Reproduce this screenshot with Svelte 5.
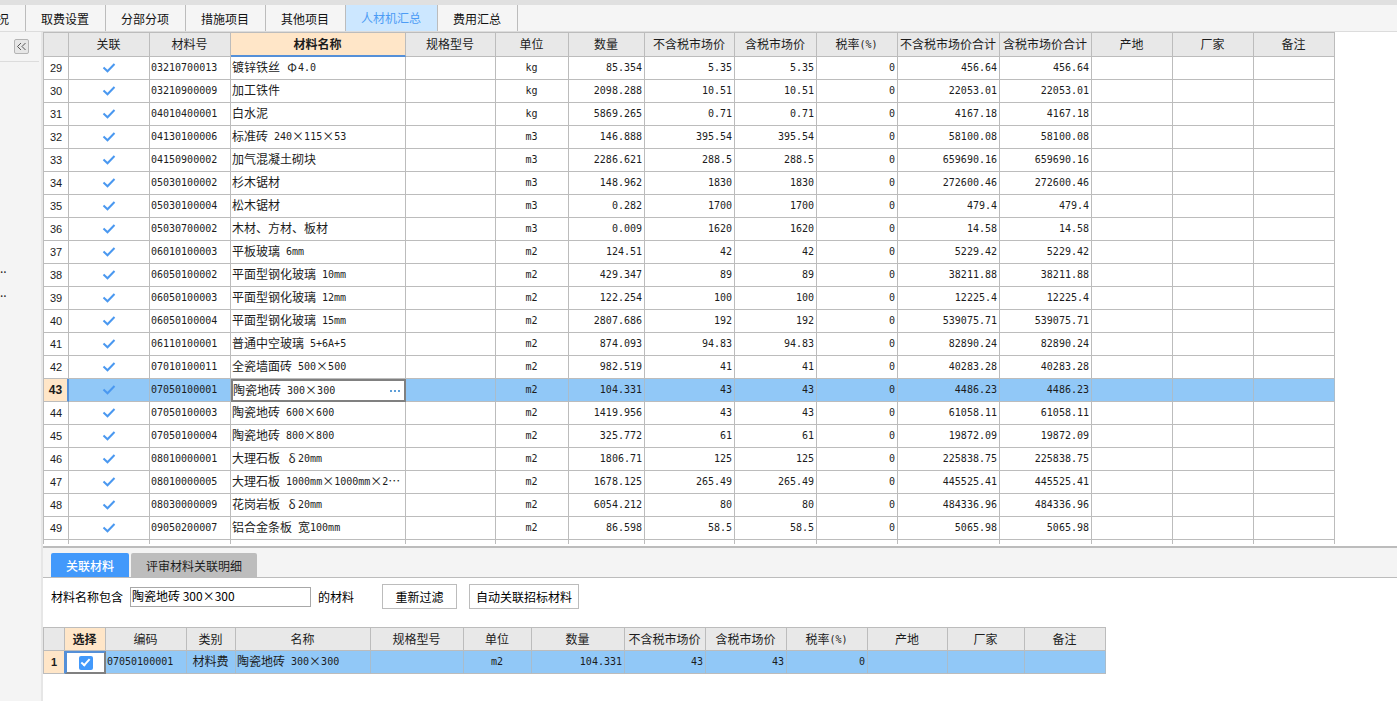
<script lang="ts">
	interface Column {
		label: string;
		width: number;
		active?: boolean;
	}

	const tabs = ['况', '取费设置', '分部分项', '措施项目', '其他项目', '人材机汇总', '费用汇总'];
	let activeTab = $state('人材机汇总');
	let filter = $state('陶瓷地砖 300×300');
	let linked = $state(true);
	const selected = 43;

	const columns: Column[] = [
		{ label: '', width: 25 },
		{ label: '关联', width: 81 },
		{ label: '材料号', width: 81 },
		{ label: '材料名称', width: 175, active: true },
		{ label: '规格型号', width: 90 },
		{ label: '单位', width: 73 },
		{ label: '数量', width: 76 },
		{ label: '不含税市场价', width: 90 },
		{ label: '含税市场价', width: 82 },
		{ label: '税率(%)', width: 81 },
		{ label: '不含税市场价合计', width: 102 },
		{ label: '含税市场价合计', width: 92 },
		{ label: '产地', width: 81 },
		{ label: '厂家', width: 81 },
		{ label: '备注', width: 81 }
	];

	const linkColumns: Column[] = [
		{ label: '', width: 21 },
		{ label: '选择', width: 41, active: true },
		{ label: '编码', width: 81 },
		{ label: '类别', width: 49 },
		{ label: '名称', width: 135 },
		{ label: '规格型号', width: 93 },
		{ label: '单位', width: 68 },
		{ label: '数量', width: 93 },
		{ label: '不含税市场价', width: 81 },
		{ label: '含税市场价', width: 81 },
		{ label: '税率(%)', width: 81 },
		{ label: '产地', width: 80 },
		{ label: '厂家', width: 77 },
		{ label: '备注', width: 81 }
	];

	// no, code, name, unit, quantity, price, total
	const materials: [number, string, string, string, string, string, string][] = [
		[29, '03210700013', '镀锌铁丝 Φ4.0', 'kg', '85.354', '5.35', '456.64'],
		[30, '03210900009', '加工铁件', 'kg', '2098.288', '10.51', '22053.01'],
		[31, '04010400001', '白水泥', 'kg', '5869.265', '0.71', '4167.18'],
		[32, '04130100006', '标准砖 240×115×53', 'm3', '146.888', '395.54', '58100.08'],
		[33, '04150900002', '加气混凝土砌块', 'm3', '2286.621', '288.5', '659690.16'],
		[34, '05030100002', '杉木锯材', 'm3', '148.962', '1830', '272600.46'],
		[35, '05030100004', '松木锯材', 'm3', '0.282', '1700', '479.4'],
		[36, '05030700002', '木材、方材、板材', 'm3', '0.009', '1620', '14.58'],
		[37, '06010100003', '平板玻璃 6mm', 'm2', '124.51', '42', '5229.42'],
		[38, '06050100002', '平面型钢化玻璃 10mm', 'm2', '429.347', '89', '38211.88'],
		[39, '06050100003', '平面型钢化玻璃 12mm', 'm2', '122.254', '100', '12225.4'],
		[40, '06050100004', '平面型钢化玻璃 15mm', 'm2', '2807.686', '192', '539075.71'],
		[41, '06110100001', '普通中空玻璃 5+6A+5', 'm2', '874.093', '94.83', '82890.24'],
		[42, '07010100011', '全瓷墙面砖 500×500', 'm2', '982.519', '41', '40283.28'],
		[43, '07050100001', '陶瓷地砖 300×300', 'm2', '104.331', '43', '4486.23'],
		[44, '07050100003', '陶瓷地砖 600×600', 'm2', '1419.956', '43', '61058.11'],
		[45, '07050100004', '陶瓷地砖 800×800', 'm2', '325.772', '61', '19872.09'],
		[46, '08010000001', '大理石板 δ20mm', 'm2', '1806.71', '125', '225838.75'],
		[47, '08010000005', '大理石板 1000mm×1000mm×2…', 'm2', '1678.125', '265.49', '445525.41'],
		[48, '08030000009', '花岗岩板 δ20mm', 'm2', '6054.212', '80', '484336.96'],
		[49, '09050200007', '铝合金条板 宽100mm', 'm2', '86.598', '58.5', '5065.98']
	];

	// Half-width runs use the mono face, symbols take a full character cell
	function runs(text: string) {
		return (text.match(/[×δΦ…]|[\x20-\x7e]+|[^\x20-\x7e×δΦ…]+/g) ?? []).map((part) => ({
			part,
			kind: /[×δΦ…]/.test(part) ? 'wide' : /[\x20-\x7e]/.test(part) ? 'mono' : 'han'
		}));
	}
</script>

{#snippet mixed(text: string)}
	{#each runs(text) as { part, kind }}<span class={kind}>{part}</span>{/each}
{/snippet}

{#snippet head(cols: Column[])}
	<colgroup>
		{#each cols as col}
			<col style:width="{col.width}px" />
		{/each}
	</colgroup>
	<thead>
		<tr>
			{#each cols as col}
				<th scope="col" class:active={col.active}>{@render mixed(col.label)}</th>
			{/each}
		</tr>
	</thead>
{/snippet}

<div class="app">
	<nav class="tabs">
		{#each tabs as tab}
			<button class="tab" class:active={tab === activeTab} onclick={() => (activeTab = tab)}>{tab}</button>
		{/each}
	</nav>

	<div class="body">
		<aside>
			<div class="aside-head">
				<button class="collapse" aria-label="收起">
					<svg width="11" height="9" viewBox="0 0 11 9" fill="none" stroke="#555">
						<path d="M5 1 1.5 4.5 5 8M9.5 1 6 4.5 9.5 8" />
					</svg>
				</button>
			</div>
			<div class="tree">
				<span>..</span>
				<span>..</span>
			</div>
		</aside>

		<main>
			<section class="grid-area">
				<table class="grid main-grid">
					{@render head(columns)}
					<tbody>
						{#each materials as [no, code, name, unit, quantity, price, total]}
							<tr class:selected={no === selected}>
								<th scope="row" class="no">{no}</th>
								<td class="center">
									<svg class="check" width="14" height="10" viewBox="0 0 14 10" fill="none">
										<path d="M1.5 4.5 5.5 8.3 12.5 1" stroke="#4a98f0" stroke-width="2" />
									</svg>
								</td>
								<td>{@render mixed(code)}</td>
								<td class="name">
									{#if no === selected}
										<div class="editor">
											<span>{@render mixed(name)}</span>
											<button class="more" aria-label="选择材料"><i></i><i></i><i></i></button>
										</div>
									{:else}
										{@render mixed(name)}
									{/if}
								</td>
								<td></td>
								<td class="center">{@render mixed(unit)}</td>
								<td class="num">{@render mixed(quantity)}</td>
								<td class="num">{@render mixed(price)}</td>
								<td class="num">{@render mixed(price)}</td>
								<td class="num">{@render mixed('0')}</td>
								<td class="num">{@render mixed(total)}</td>
								<td class="num">{@render mixed(total)}</td>
								<td></td>
								<td></td>
								<td></td>
							</tr>
						{/each}
						<tr>
							{#each columns as _}
								<td></td>
							{/each}
						</tr>
					</tbody>
				</table>
			</section>

			<section class="panel">
				<div class="panel-tabs">
					<button class="panel-tab active">关联材料</button>
					<button class="panel-tab">评审材料关联明细</button>
				</div>
				<form class="filter" onsubmit={(e) => e.preventDefault()}>
					<label for="filter">材料名称包含</label>
					<input id="filter" type="text" bind:value={filter} />
					<span>的材料</span>
					<button class="refilter">重新过滤</button>
					<button type="button" class="auto">自动关联招标材料</button>
				</form>
				<table class="grid link-grid">
					{@render head(linkColumns)}
					<tbody>
						<tr class="selected">
							<th scope="row" class="no">1</th>
							<td class="pick"><input type="checkbox" aria-label="选择" bind:checked={linked} /></td>
							<td>{@render mixed('07050100001')}</td>
							<td class="center">材料费</td>
							<td>{@render mixed('陶瓷地砖 300×300')}</td>
							<td></td>
							<td class="center">{@render mixed('m2')}</td>
							<td class="num">{@render mixed('104.331')}</td>
							<td class="num">{@render mixed('43')}</td>
							<td class="num">{@render mixed('43')}</td>
							<td class="num">{@render mixed('0')}</td>
							<td></td>
							<td></td>
							<td></td>
						</tr>
					</tbody>
				</table>
			</section>
		</main>
	</div>
</div>

<style>
	:global(body) {
		margin: 0;
		background: #fff;
	}
	.app {
		display: flex;
		flex-direction: column;
		height: 100vh;
		overflow: hidden;
		font-family: 'Noto Sans CJK SC', sans-serif;
		font-size: 12px;
		color: #1c1c1c;
	}
	button,
	input {
		box-sizing: border-box;
		margin: 0;
		font: inherit;
		color: inherit;
	}

	.tabs {
		display: flex;
		height: 26px;
		border-top: 5px solid #e0e0e0;
		border-bottom: 1px solid #dcdcdc;
		background: #f5f5f5;
	}
	.tab {
		flex: none;
		padding: 0 16px 0 15px;
		border: 0;
		border-right: 1px solid #bcbcbc;
		background: none;
		color: #111;
	}
	.tab:first-child {
		margin-left: -18px;
	}
	.tab.active {
		padding-bottom: 2px;
		background: #cce7ff;
		color: #4c9cf5;
	}

	.body {
		display: flex;
		flex: 1;
		min-height: 0;
	}
	aside {
		flex: none;
		width: 41px;
		border-right: 2px solid #e6e6e6;
		background: #f4f4f4;
	}
	.aside-head {
		display: flex;
		height: 22px;
		margin-right: 2px;
		padding: 7px 0 0 14px;
		border-bottom: 1px solid #dcdcdc;
	}
	.collapse {
		display: grid;
		place-items: center;
		width: 15px;
		height: 15px;
		padding: 0;
		border: 1px solid #b4b4b4;
		border-radius: 2px;
		background: #e6e6e6;
	}
	.tree {
		display: flex;
		flex-direction: column;
		padding-top: 194px;
		line-height: 24px;
	}

	main {
		display: flex;
		flex: 1;
		flex-direction: column;
		min-width: 0;
	}
	.grid-area {
		flex: 1;
		min-height: 0;
		margin-bottom: 2px;
		overflow: hidden;
	}

	.grid {
		table-layout: fixed;
		border-spacing: 0;
		border-top: 1px solid #bcbcbc;
		border-left: 1px solid #bcbcbc;
	}
	.main-grid {
		width: 1292px;
	}
	.link-grid {
		width: 1063px;
	}
	.grid th,
	.grid td {
		box-sizing: border-box;
		height: 23px;
		padding: 0 2px 2px 1px;
		border-right: 1px solid #bcbcbc;
		border-bottom: 1px solid #bcbcbc;
		font-weight: 400;
		line-height: 18px;
		text-align: left;
		white-space: nowrap;
		overflow: hidden;
	}
	.grid thead th {
		padding: 0 1px 1px 0;
		background: #e8e8e8;
		text-align: center;
	}
	.main-grid thead th {
		height: 24px;
	}
	.grid thead th.active {
		background: #ffe6c8;
		font-weight: 700;
	}
	.main-grid thead th.active {
		border-bottom: 2px solid #5590d8;
	}
	.grid .no {
		padding: 0;
		font-family: 'Liberation Sans', sans-serif;
		font-size: 11px;
		text-align: center;
	}
	.grid td.center {
		text-align: center;
	}
	.grid td.num {
		text-align: right;
	}
	.selected td {
		border-right-color: #a9bccb;
		background: #91c8f7;
	}
	.grid .selected .no {
		border-right: 2px solid #5590d8;
		background: #ffe6c8;
		font-weight: 700;
	}
	.main-grid .selected .no {
		font-size: 12px;
	}
	.check {
		display: block;
		margin: 2px auto 0;
	}

	.mono {
		font-family: 'DejaVu Sans Mono', 'Liberation Mono', monospace;
		font-size: 10px;
		line-height: 12px;
		vertical-align: 1px;
		white-space: pre;
	}
	.wide {
		display: inline-block;
		width: 12px;
		line-height: 12px;
		text-align: center;
	}
	.han {
		white-space: pre;
	}

	.grid .selected .name {
		padding: 0;
		border: 0;
		background: #fff;
	}
	.editor {
		display: flex;
		box-sizing: border-box;
		justify-content: space-between;
		height: 23px;
		border: 2px solid #808080;
		line-height: 17px;
	}
	.more {
		display: flex;
		align-items: center;
		gap: 2px;
		padding: 0 4px;
		border: 0;
		background: none;
	}
	.more i {
		width: 2px;
		height: 2px;
		background: #5f9fd8;
	}

	.panel {
		height: 155px;
		border-top: 2px solid #bcbcbc;
		box-sizing: border-box;
	}
	.panel-tabs {
		display: flex;
		gap: 2px;
		height: 24px;
		padding: 5px 0 0 8px;
		border-bottom: 1px solid #bcbcbc;
		background: #f4f4f4;
	}
	.panel-tab {
		padding: 0 15px;
		border: 0;
		border-radius: 2px 2px 0 0;
		background: #bdbdbd;
	}
	.panel-tab.active {
		background: #4299fb;
		color: #fff;
		font-weight: 500;
	}
	.filter {
		display: flex;
		align-items: center;
		padding: 6px 0 18px 8px;
		color: #000;
	}
	.filter input {
		width: 181px;
		height: 20px;
		margin: 0 7px;
		padding: 0 1px 2px;
		border: 1px solid #a8a8a8;
	}
	.filter button {
		height: 25px;
		border: 1px solid #bcbcbc;
		background: #fff;
	}
	.refilter {
		width: 75px;
		margin: 0 12px 0 28px;
		padding: 0;
	}
	.auto {
		padding: 0 6px;
	}

	.grid .pick {
		padding: 0;
		border: 2px solid #5590d8;
		border-right-color: #808080;
		border-bottom-color: #808080;
		background: #fff;
	}
	.link-grid .selected .no {
		border-right-width: 1px;
	}
	.pick input {
		display: block;
		width: 14px;
		height: 14px;
		margin: 0 auto;
		border-radius: 2px;
		background: #fff;
		appearance: none;
	}
	.pick input:checked {
		background: #4299fb;
	}
	.pick input:checked::after {
		content: '';
		display: block;
		box-sizing: border-box;
		width: 5px;
		height: 9px;
		margin: 1px 0 0 4px;
		border: solid #fff;
		border-width: 0 2px 2px 0;
		transform: rotate(42deg);
	}
</style>
